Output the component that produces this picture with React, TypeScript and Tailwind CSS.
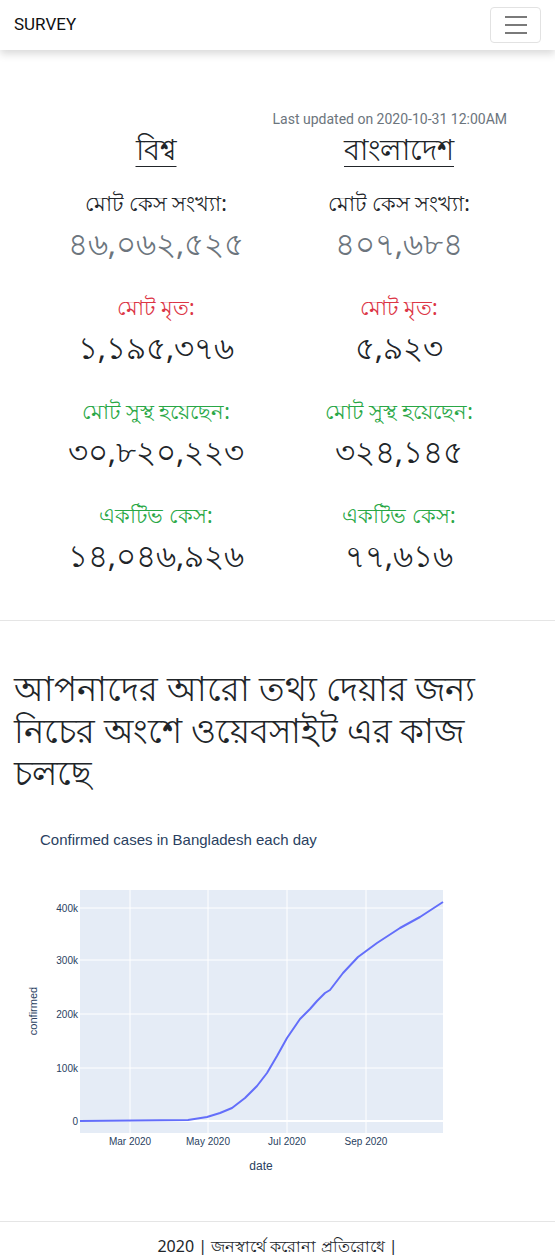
import React from "react";

const font = { fontFamily: '"Noto Sans", Roboto, sans-serif' };

type Stat = { label: string; value: string; labelCls: string; valueCls: string };

function Col({ title, stats }: { title: string; stats: Stat[] }) {
  return (
    <div className="flex flex-col items-center w-[243px]">
      <div className="text-[29px] leading-[40px] underline underline-offset-[6px] decoration-1 text-[#212529]">{title}</div>
      <div className="mt-[17px] flex flex-col items-center">
        {stats.map((s, i) => (
          <div key={i} className="flex flex-col items-center mb-[24px]">
            <div className={`text-[21px] leading-[34px] ${s.labelCls}`}>{s.label}</div>
            <div className={`text-[31px] leading-[46px] ${s.valueCls}`}>{s.value}</div>
          </div>
        ))}
      </div>
    </div>
  );
}

const curve: [number, number][] = [
  [80, 1120], [188, 1119], [207, 1116], [220, 1112], [232, 1107], [245, 1097], [257, 1085], [267, 1072], [277, 1055], [287, 1037], [300, 1018], [310, 1008], [317, 1000], [325, 992], [330, 989], [343, 972], [358, 956], [377, 942], [400, 927], [420, 916], [443, 901],
];

function Chart() {
  const oy = 800;
  const pts = curve.map(([x, y]) => `${x},${y - oy}`).join(" ");
  const yTicks = [
    { l: "400k", y: 907 },
    { l: "300k", y: 959 },
    { l: "200k", y: 1013 },
    { l: "100k", y: 1067 },
  ];
  const xTicks = [
    { l: "Mar 2020", x: 130 },
    { l: "May 2020", x: 208 },
    { l: "Jul 2020", x: 287 },
    { l: "Sep 2020", x: 366 },
  ];
  return (
    <svg width="555" height="420" viewBox="0 0 555 420" className="block">
      <rect x="80" y={889 - oy} width="363" height={1132 - 889} fill="#e5ecf6" />
      {xTicks.map((t) => (
        <line key={t.l} x1={t.x} x2={t.x} y1={889 - oy} y2={1132 - oy} stroke="#fff" strokeWidth="1" />
      ))}
      {yTicks.map((t) => (
        <line key={t.l} x1="80" x2="443" y1={t.y - oy} y2={t.y - oy} stroke="#fff" strokeWidth="1" />
      ))}
      <line x1="80" x2="443" y1={1120 - oy} y2={1120 - oy} stroke="#fff" strokeWidth="2" />
      <polyline points={pts} fill="none" stroke="#636efa" strokeWidth="2" strokeLinejoin="round" />
      <g style={{ fontFamily: '"Liberation Sans", Arial, sans-serif' }} fill="#2a3f5f">
        {yTicks.map((t) => (
          <text key={t.l} x="78" y={t.y - oy + 3.5} fontSize="10" textAnchor="end">{t.l}</text>
        ))}
        <text x="78" y={1120 - oy + 3.5} fontSize="10" textAnchor="end">0</text>
        {xTicks.map((t) => (
          <text key={t.l} x={t.x} y={1144 - oy} fontSize="10" textAnchor="middle">{t.l}</text>
        ))}
        <text x="261" y={1169 - oy} fontSize="12" textAnchor="middle">date</text>
        <text x="0" y="0" fontSize="11" textAnchor="middle" transform={`translate(37 ${1010 - oy}) rotate(-90)`}>confirmed</text>
        <text x="40" y={844 - oy} fontSize="15">Confirmed cases in Bangladesh each day</text>
      </g>
    </svg>
  );
}

export default function App() {
  const red = "text-[#dc3545]";
  const green = "text-[#28a745]";
  const gray = "text-[#6c757d]";
  const dark = "text-[#212529]";
  return (
    <div className="w-[555px] min-h-[1255px] bg-white text-[#212529]" style={font}>
      <nav className="h-[50px] flex items-center justify-between pl-[14px] pr-[14px] bg-white shadow-[0_4px_8px_rgba(0,0,0,0.15)] relative z-10">
        <span className="text-[17px] text-[#111]" style={{ fontFamily: "Roboto, sans-serif" }}>SURVEY</span>
        <button className="w-[51px] h-[36px] border border-[#e2e2e2] rounded-[4px] flex flex-col items-center justify-center gap-[6px]">
          <span className="block w-[22px] h-[2px] bg-[#7a7a7a]" />
          <span className="block w-[22px] h-[2px] bg-[#7a7a7a]" />
          <span className="block w-[22px] h-[2px] bg-[#7a7a7a]" />
        </button>
      </nav>
      <section className="pt-[59px] pb-[18px]">
        <div className="flex justify-end pr-[48px] text-[14px] leading-[20px] text-[#6c757d]" style={{ fontFamily: "Roboto, sans-serif" }}>
          Last updated on 2020-10-31 12:00AM
        </div>
        <div className="flex justify-center">
          <Col
            title="বিশ্ব"
            stats={[
              { label: "মোট কেস সংখ্যা:", value: "৪৬,০৬২,৫২৫", labelCls: dark, valueCls: gray },
              { label: "মোট মৃত:", value: "১,১৯৫,৩৭৬", labelCls: red, valueCls: dark },
              { label: "মোট সুস্থ হয়েছেন:", value: "৩০,৮২০,২২৩", labelCls: green, valueCls: dark },
              { label: "একটিভ কেস:", value: "১৪,০৪৬,৯২৬", labelCls: green, valueCls: dark },
            ]}
          />
          <Col
            title="বাংলাদেশ"
            stats={[
              { label: "মোট কেস সংখ্যা:", value: "৪০৭,৬৮৪", labelCls: dark, valueCls: gray },
              { label: "মোট মৃত:", value: "৫,৯২৩", labelCls: red, valueCls: dark },
              { label: "মোট সুস্থ হয়েছেন:", value: "৩২৪,১৪৫", labelCls: green, valueCls: dark },
              { label: "একটিভ কেস:", value: "৭৭,৬১৬", labelCls: green, valueCls: dark },
            ]}
          />
        </div>
      </section>
      <hr className="border-0 border-t border-[#e5e5e5]" />
      <section className="px-[14px] pt-[46px] h-[180px]">
        <h1 className="w-[490px] text-[34px] leading-[42px] text-[#212529]">আপনাদের আরো তথ্য দেয়ার জন্য নিচের অংশে ওয়েবসাইট এর কাজ চলছে</h1>
      </section>
      <Chart />
      <hr className="border-0 border-t border-[#e5e5e5]" />
      <footer className="text-center text-[16px] leading-[24px] pt-[12px]">2020 | জনস্বার্থে করোনা প্রতিরোধে |</footer>
    </div>
  );
}
